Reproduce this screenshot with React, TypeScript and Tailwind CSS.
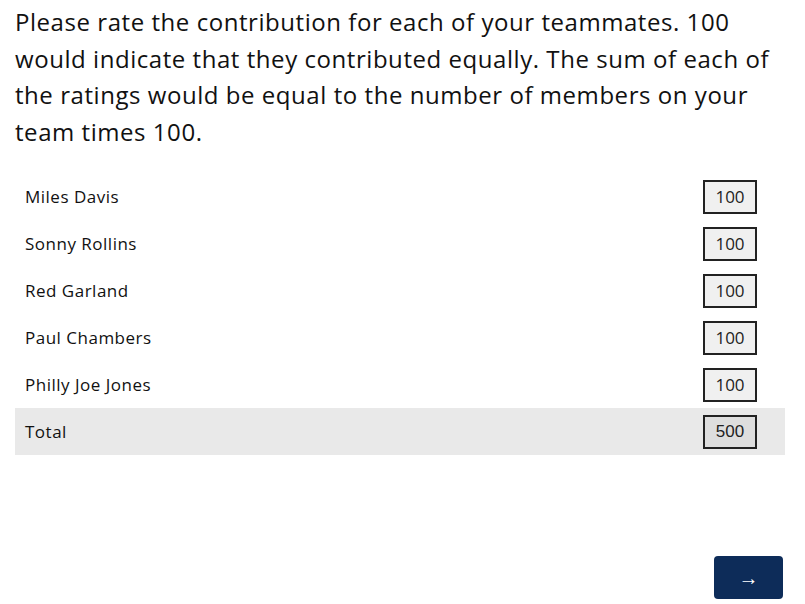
const members = ['Miles Davis', 'Sonny Rollins', 'Red Garland', 'Paul Chambers', 'Philly Joe Jones'];

export default function App() {
  return (
    <div className="w-[805px] h-[604px] bg-white text-[#111] font-['Open_Sans',sans-serif] relative">
      <div className="pl-[15px] pr-[20px] pt-[4px]">
        <p className="text-[24px] leading-[36.5px] tracking-[0.55px] pr-[10px]">
          Please rate the contribution for each of your teammates. 100 would indicate that they contributed equally. The sum of each of the ratings would be equal to the number of members on your team times 100.
        </p>
        <div className="mt-[23px]">
          {members.map((name) => (
            <div key={name} className="flex items-center justify-between h-[47px] pl-[10px] pr-[28px]">
              <span className="text-[17px] tracking-[0.5px]">{name}</span>
              <div className="w-[54px] h-[34px] border-2 border-[#222] bg-[#f0f0f0] flex items-center justify-center text-[17px] text-[#222]">
                100
              </div>
            </div>
          ))}
          <div className="flex items-center justify-between h-[47px] pl-[10px] pr-[28px] bg-[#e9e9e9]">
            <span className="text-[17px] tracking-[0.5px]">Total</span>
            <div className="w-[54px] h-[34px] border-2 border-[#222] bg-[#dedede] flex items-center justify-center text-[17px] text-[#222] font-['Liberation_Sans',sans-serif]">
              500
            </div>
          </div>
        </div>
      </div>
      <div className="absolute right-[22px] bottom-[5px]">
        <button className="w-[69px] h-[43px] rounded-[4px] bg-[#0d2c59] text-white text-[20px] font-['Liberation_Sans',sans-serif] flex items-center justify-center">
          →
        </button>
      </div>
    </div>
  );
}
